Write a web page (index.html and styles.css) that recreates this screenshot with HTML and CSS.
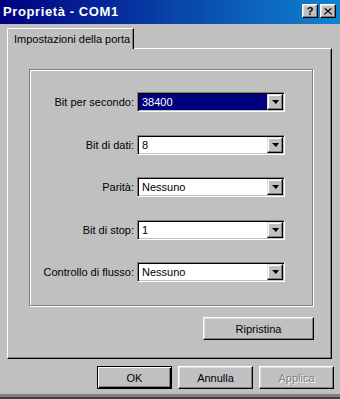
FILE: index.html
```html
<!DOCTYPE html>
<html>
<head>
    <title>Proprietà - COM1</title>
    <link rel="stylesheet" href="styles.css">
</head>
<body>
    <div class="window">
        <div class="titlebar">
            <span class="title">Proprietà - COM1</span>
            <div class="title-buttons">
                <button class="cap-btn help">?</button>
                <button class="cap-btn close">
                    <svg width="8" height="7" viewBox="0 0 8 7">
                        <path d="M0.5 0.5 L7.5 6.5 M1.5 0.5 L8 6.5 M7.5 0.5 L0.5 6.5 M6.5 0.5 L0 6.5" stroke="#000" stroke-width="1" fill="none"/>
                    </svg>
                </button>
            </div>
        </div>

        <div class="sheet">
            <div class="tabs">
                <div class="tab active">Impostazioni della porta</div>
            </div>
            <div class="panel">
                <div class="group">
                    <div class="form">
                        <label>Bit per secondo:</label>
                        <div class="combo focused">
                            <span class="value">38400</span>
                            <span class="drop"><i class="arrow"></i></span>
                        </div>

                        <label>Bit di dati:</label>
                        <div class="combo">
                            <span class="value">8</span>
                            <span class="drop"><i class="arrow"></i></span>
                        </div>

                        <label>Parità:</label>
                        <div class="combo">
                            <span class="value">Nessuno</span>
                            <span class="drop"><i class="arrow"></i></span>
                        </div>

                        <label>Bit di stop:</label>
                        <div class="combo">
                            <span class="value">1</span>
                            <span class="drop"><i class="arrow"></i></span>
                        </div>

                        <label>Controllo di flusso:</label>
                        <div class="combo">
                            <span class="value">Nessuno</span>
                            <span class="drop"><i class="arrow"></i></span>
                        </div>
                    </div>
                </div>
                <div class="panel-actions">
                    <button class="btn reset">Ripristina</button>
                </div>
            </div>
        </div>

        <div class="dialog-actions">
            <button class="btn default">OK</button>
            <button class="btn">Annulla</button>
            <button class="btn" disabled>Applica</button>
        </div>
    </div>
</body>
</html>
```

FILE: styles.css
```css
body {
    margin: 0;
    padding: 0;
    background-color: #c0c0c0;
    font-family: 'Liberation Sans', Arial, sans-serif;
    font-size: 11px;
    color: #000;
    overflow: hidden;
}
.window {
    width: 340px;
    height: 399px;
    box-sizing: border-box;
    background-color: #c0c0c0;
    border-bottom: 2px solid #404040;
    box-shadow: inset 0 -3px 0 #808080;
}

/* barra del titolo */
.titlebar {
    height: 24px;
    box-sizing: border-box;
    padding: 0 4px 2px 3px;
    display: flex;
    align-items: center;
    justify-content: space-between;
    background: linear-gradient(to right, #000080, #1084d0);
    color: white;
}
.title {
    font-weight: bold;
    font-size: 13px;
    letter-spacing: 0.6px;
}
.title-buttons {
    display: flex;
    gap: 2px;
}
.cap-btn {
    width: 16px;
    height: 14px;
    padding: 0;
    margin: 0;
    background-color: #c0c0c0;
    border: 1px solid;
    border-color: #fff #000 #000 #fff;
    box-shadow: inset -1px -1px 0 #808080, inset 1px 1px 0 #dfdfdf;
    display: flex;
    align-items: center;
    justify-content: center;
    font-family: 'Liberation Sans', Arial, sans-serif;
    font-weight: bold;
    font-size: 11px;
    line-height: 1;
    color: #000;
}

/* schede */
.sheet {
    margin: 4px 8px 0 7px;
}
.tabs {
    display: flex;
}
.tab {
    position: relative;
    z-index: 1;
    height: 21px;
    box-sizing: border-box;
    margin-bottom: -1px;
    padding: 4px 3px 0 6px;
    background-color: #c0c0c0;
    border-top: 1px solid #fff;
    border-left: 1px solid #fff;
    border-right: 1px solid #000;
    border-top-left-radius: 2px;
    box-shadow: inset -1px 0 0 #808080;
}
.panel {
    height: 311px;
    box-sizing: border-box;
    padding: 20px 0 0 21px;
    border-top: 1px solid #fff;
    border-left: 1px solid #fff;
    border-right: 1px solid #000;
    border-bottom: 1px solid #000;
    box-shadow: inset -1px -1px 0 #808080;
    display: flex;
    flex-direction: column;
}
.group {
    width: 284px;
    height: 237px;
    box-sizing: border-box;
    border: 1px solid #808080;
    box-shadow: 1px 1px 0 #fff, inset 1px 1px 0 #fff;
    padding-top: 22px;
}
.form {
    display: grid;
    grid-template-columns: 104px 148px;
    column-gap: 3px;
    row-gap: 22.5px;
    align-items: center;
}
.form label {
    text-align: right;
}

/* caselle combinate */
.combo {
    height: 20px;
    box-sizing: border-box;
    border: 1px solid;
    border-color: #808080 #fff #fff #808080;
    box-shadow: inset 1px 1px 0 #000, inset -1px -1px 0 #c0c0c0;
    background-color: white;
    padding: 1px;
    display: flex;
}
.combo .value {
    flex: 1;
    padding-left: 3px;
    line-height: 16px;
}
.combo.focused .value {
    background-color: #000080;
    color: white;
}
.drop {
    width: 16px;
    height: 16px;
    box-sizing: border-box;
    background-color: #c0c0c0;
    border: 1px solid;
    border-color: #dfdfdf #000 #000 #dfdfdf;
    box-shadow: inset -1px -1px 0 #808080, inset 1px 1px 0 #fff;
    display: flex;
    align-items: center;
    justify-content: center;
}
.arrow {
    width: 0;
    height: 0;
    border-left: 4px solid transparent;
    border-right: 3px solid transparent;
    border-top: 4px solid #000;
}

/* pulsanti */
.btn {
    width: 75px;
    height: 23px;
    padding: 0;
    margin: 0;
    box-sizing: border-box;
    background-color: #c0c0c0;
    border: 1px solid;
    border-color: #fff #000 #000 #fff;
    box-shadow: inset -1px -1px 0 #808080, inset 1px 1px 0 #dfdfdf;
    font-family: 'Liberation Sans', Arial, sans-serif;
    font-size: 11px;
    color: #000;
}
.btn.default {
    border: 1px solid #000;
    box-shadow: inset 1px 1px 0 #fff, inset -1px -1px 0 #000, inset -2px -2px 0 #808080;
}
.btn:disabled {
    color: #808080;
    text-shadow: 1px 1px 0 #fff;
}
.panel-actions {
    width: 285px;
    display: flex;
    justify-content: flex-end;
    margin-top: 11px;
}
.btn.reset {
    width: 111px;
}
.dialog-actions {
    display: flex;
    justify-content: flex-end;
    gap: 6px;
    margin-top: 7px;
    padding-right: 6px;
}
```
